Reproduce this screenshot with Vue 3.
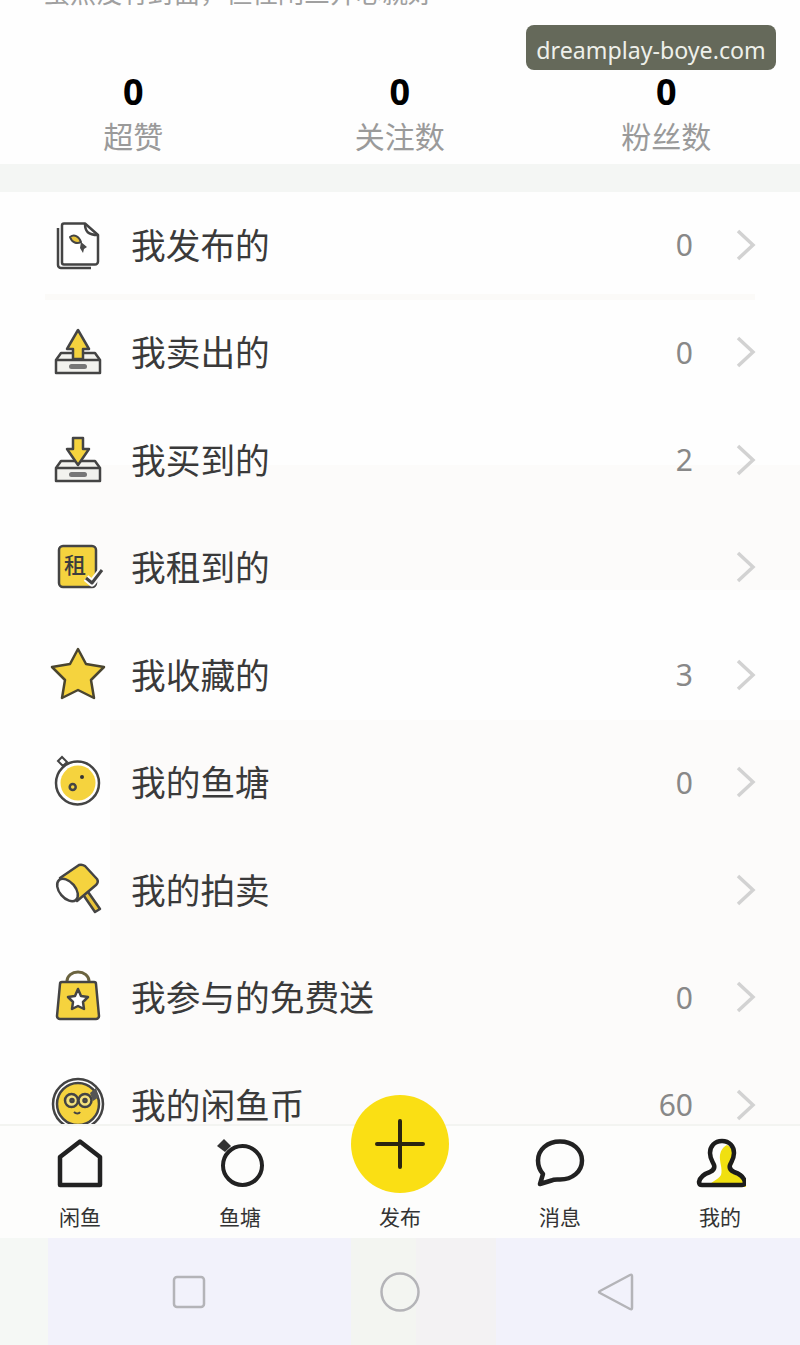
<script setup>
const stats = [
  { value: 0, label: "超赞" },
  { value: 0, label: "关注数" },
  { value: 0, label: "粉丝数" },
];

const rows = [
  { icon: "post", label: "我发布的", count: "0" },
  { icon: "sold", label: "我卖出的", count: "0" },
  { icon: "bought", label: "我买到的", count: "2" },
  { icon: "rent", label: "我租到的", count: "" },
  { icon: "star", label: "我收藏的", count: "3" },
  { icon: "pond", label: "我的鱼塘", count: "0" },
  { icon: "auction", label: "我的拍卖", count: "" },
  { icon: "free", label: "我参与的免费送", count: "0" },
  { icon: "coin", label: "我的闲鱼币", count: "60" },
];

const tabs = [
  { icon: "home", label: "闲鱼" },
  { icon: "ring", label: "鱼塘" },
  { icon: "plus", label: "发布" },
  { icon: "chat", label: "消息" },
  { icon: "me", label: "我的" },
];
</script>

<template>
  <div class="page">
    <div class="intro">虽然没有封面，但性闲三开心就好</div>
    <div class="watermark">dreamplay-boye.com</div>

    <div class="stats">
      <div v-for="s in stats" :key="s.label" class="stat">
        <div class="stat-value">{{ s.value }}</div>
        <div class="stat-label">{{ s.label }}</div>
      </div>
    </div>

    <div class="band"></div>

    <div class="list">
      <div v-for="row in rows" :key="row.label" class="row">
        <div class="row-icon">
          <svg v-if="row.icon === 'post'" width="60" height="60" viewBox="0 0 60 60" fill="none" stroke="#444" stroke-width="2.500" stroke-linejoin="round">
            <path d="M10 12v37a3 3 0 0 0 3 3h30" />
            <path d="M16 7.500a2 2 0 0 0-2 2v37a2 2 0 0 0 2 2h31a3 3 0 0 0 3-3V19L37 7.500z" fill="#fff" />
            <path d="M37 7.500c0 8 3 11.500 13 11.500" />
            <path d="M22 21c4-3 9-1 11 5-4 2-9 1-11-5z" fill="#e9c43a" stroke-width="2" />
            <path d="M33 26l6 5-3 2-1 4-3-5z" fill="#4a4a4a" stroke="none" />
          </svg>

          <svg v-else-if="row.icon === 'sold'" width="60" height="60" viewBox="0 0 60 60" fill="none" stroke="#444" stroke-width="2.500" stroke-linejoin="round">
            <path d="M8 37l5-7h34l5 7v13H8z" fill="#f2f2ee" />
            <path d="M8 37h44" />
            <path d="M30 7L19 26h6v10h10V26h6z" fill="#f5d33e" />
            <rect x="21" y="41" width="18" height="5" rx="2.500" fill="#777" stroke="none" />
          </svg>

          <svg v-else-if="row.icon === 'bought'" width="60" height="60" viewBox="0 0 60 60" fill="none" stroke="#444" stroke-width="2.500" stroke-linejoin="round">
            <path d="M8 37l5-7h34l5 7v13H8z" fill="#f2f2ee" />
            <path d="M8 37h44" />
            <path d="M25 7h10v11h6L30 34 19 18h6z" fill="#f5d33e" />
            <rect x="21" y="41" width="18" height="5" rx="2.500" fill="#777" stroke="none" />
          </svg>

          <svg v-else-if="row.icon === 'rent'" width="60" height="60" viewBox="0 0 60 60" fill="none" stroke="#444" stroke-width="2.500" stroke-linejoin="round">
            <rect x="11" y="8" width="37" height="41" rx="4" fill="#f5d33e" />
            <text x="27" y="35" text-anchor="middle" class="rent-text">租</text>
            <path d="M38 40l6 5 10-13" stroke="#fdfcfb" stroke-width="7" />
            <path d="M38 40l6 5 10-13" fill="none" stroke-width="3" />
          </svg>

          <svg v-else-if="row.icon === 'star'" width="60" height="60" viewBox="0 0 60 60" stroke="#4a4530" stroke-width="2.500" stroke-linejoin="round">
            <path d="M30 3l8 15 18 3-13 13 3 18-16-8-16 8 3-18L4 21l18-3z" fill="#f5d33e" />
          </svg>

          <svg v-else-if="row.icon === 'pond'" width="60" height="60" viewBox="0 0 60 60" fill="none" stroke="#444" stroke-width="2.500">
            <circle cx="29.500" cy="30" r="21.500" fill="#fff" />
            <circle cx="30" cy="30" r="17.500" fill="#f5d33e" stroke="none" />
            <path d="M10 8l4-4 5 5-4 4z" fill="#fff" stroke-width="2" />
            <circle cx="24.700" cy="34" r="3" />
            <circle cx="34" cy="24" r="2" fill="#333" stroke="none" />
          </svg>

          <svg v-else-if="row.icon === 'auction'" width="60" height="60" viewBox="0 0 60 60" fill="none" stroke="#444" stroke-width="2.500" stroke-linejoin="round">
            <path d="M34 32l13 19 5-3-14-20z" fill="#e9c43a" />
            <path d="M12 17L31 4q3-1 6 1l12 13q2 3-1 6L29 40z" fill="#f5d33e" />
            <ellipse cx="19.500" cy="29" rx="8" ry="13" transform="rotate(-40 19.500 29)" fill="#fff" />
          </svg>

          <svg v-else-if="row.icon === 'free'" width="60" height="60" viewBox="0 0 60 60" fill="none" stroke="#444" stroke-width="2.500" stroke-linejoin="round">
            <path d="M19 16v-3a11 9 0 0 1 22 0v3" stroke="#6b6440" stroke-width="3" />
            <path d="M14 14h32a2 2 0 0 1 2 2l3 32a3 3 0 0 1-3 3H12a3 3 0 0 1-3-3l3-32a2 2 0 0 1 2-2z" fill="#f5d33e" />
            <path d="M30 21l3 7 7 1-5 5 1 7-6-3-6 3 1-7-5-5 7-1z" fill="#fff" />
          </svg>

          <svg v-else-if="row.icon === 'coin'" width="60" height="60" viewBox="0 0 60 60" fill="none" stroke="#444" stroke-width="2.500">
            <circle cx="30" cy="28" r="25" fill="#fff" />
            <circle cx="30" cy="28" r="21" fill="#f5d33e" />
            <circle cx="23.500" cy="24.500" r="6.500" fill="#f5e27c" />
            <circle cx="37" cy="24.500" r="6.500" fill="#f5e27c" />
            <circle cx="24" cy="24.500" r="1.500" />
            <circle cx="37" cy="24.500" r="1.500" />
            <path d="M26 36c2 2 5 2 6 0" stroke-width="2" />
            <path d="M42 17l6-5 3 9-6 4z" fill="#555" stroke="none" />
          </svg>
        </div>
        <div class="row-label">{{ row.label }}</div>
        <div class="row-count">{{ row.count }}</div>
        <svg class="row-arrow" width="20" height="32" viewBox="0 0 20 32" fill="none" stroke="#d2d2d2" stroke-width="3.500">
          <path d="M2 2l15 14L2 30" />
        </svg>
      </div>
    </div>

    <div class="tabbar">
      <div v-for="t in tabs" :key="t.label" class="tab">
        <div class="tab-icon">
          <svg v-if="t.icon === 'home'" width="52" height="52" viewBox="0 0 52 52" fill="none" stroke="#222" stroke-width="4.500" stroke-linejoin="round">
            <path d="M26 3.500L6 19v28h40V19z" />
          </svg>
          <svg v-else-if="t.icon === 'ring'" width="52" height="52" viewBox="0 0 52 52" fill="none" stroke="#222" stroke-width="4">
            <circle cx="28.500" cy="27.500" r="19.500" />
            <path d="M3 8l7-7 7 7-6 6z" fill="#333" stroke="none" />
          </svg>
          <div v-else-if="t.icon === 'plus'" class="plus">
            <svg width="50" height="50" viewBox="0 0 50 50" fill="none" stroke="#2a2410" stroke-width="4" stroke-linecap="round">
              <path d="M25 2v46M2 25h46" />
            </svg>
          </div>
          <svg v-else-if="t.icon === 'chat'" width="52" height="52" viewBox="0 0 52 52" fill="none" stroke="#222" stroke-width="4.500" stroke-linejoin="round">
            <path d="M26 3.500c12.500 0 22 8 22 19s-9.500 19-22 19c-3 0-6-.500-8.500 1L6 46l3-10C5.500 32 4 27 4 22.500c0-11 9.500-19 22-19z" />
          </svg>
          <svg v-else-if="t.icon === 'me'" width="52" height="52" viewBox="0 0 52 52" fill="none">
            <path d="M33 7c6 3 9 9 7 16-2 5-5 9-2 12 5 3 12 4 14 14H14c3-6 10-7 13-12 2-6-2-14-1-20 1-5 3-8 7-10z" fill="#f0e010" />
            <path d="M28 3c7.500 0 12 5.500 12 12 0 6-3 9-4 12-1 3 0 5 4 7 6 2 10 5 11 10 0 2-1 3-3 3H8c-2 0-3-1-3-3 1-5 5-8 11-10 4-2 5-4 4-7-1-3-4-6-4-12 0-6.500 4.500-12 12-12z" stroke="#1c1c1c" stroke-width="4.500" />
          </svg>
        </div>
        <div class="tab-label">{{ t.label }}</div>
      </div>
    </div>

    <div class="navbar">
      <svg width="34" height="34" viewBox="0 0 34 34" fill="none" stroke="#b4b4b8" stroke-width="2.500">
        <rect x="2" y="2" width="30" height="30" rx="3" />
      </svg>
      <svg width="40" height="40" viewBox="0 0 40 40" fill="none" stroke="#b4b4b8" stroke-width="2.500">
        <circle cx="20" cy="20" r="18.500" />
      </svg>
      <svg width="40" height="40" viewBox="0 0 40 40" fill="none" stroke="#b4b4b8" stroke-width="2.500" stroke-linejoin="round">
        <path d="M36 3q2-1 2 1v32q0 2-2 1L6 21q-2-1 0-2z" />
      </svg>
    </div>
  </div>
</template>

<style>
body {
  background: #fff;
}
</style>

<style scoped>
.page {
  position: relative;
  width: 800px;
  height: 1345px;
  overflow: hidden;
  background: #fefefe;
  display: flex;
  flex-direction: column;
  font-family: "Liberation Sans", "Noto Sans CJK SC", sans-serif;
}

.intro {
  height: 98px;
  margin-top: -24px;
  padding-left: 44px;
  font-size: 26px;
  line-height: 36px;
  color: #a0a0a0;
  flex-shrink: 0;
}

.watermark {
  position: absolute;
  top: 25px;
  left: 526px;
  width: 250px;
  height: 45px;
  border-radius: 8px;
  background: #65695a;
  color: #eef0ea;
  font-family: "Noto Sans", sans-serif;
  font-size: 23.200px;
  line-height: 50px;
  text-align: center;
}

.stats {
  display: grid;
  grid-template-columns: repeat(3, 266.500px);
  height: 90px;
  flex-shrink: 0;
}

.stat {
  text-align: center;
}

.stat-value {
  font-family: "Noto Sans", sans-serif;
  font-size: 36px;
  font-weight: 700;
  line-height: 36px;
  color: #000;
}

.stat-label {
  font-size: 30px;
  line-height: 54px;
  padding-top: 1px;
  color: #9a9a9a;
}

.band {
  height: 28px;
  background: #f4f6f4;
  flex-shrink: 0;
}

.list {
  flex: 1;
  min-height: 0;
  background:
    linear-gradient(#fcfbfa, #fcfbfa) 80px 273px / 720px 125px no-repeat,
    linear-gradient(#fcfbfa, #fcfbfa) 110px 528px / 690px 420px no-repeat,
    #fefefe;
}

.row {
  display: flex;
  align-items: center;
  height: 107.500px;
  padding: 0 44px 0 48px;
  position: relative;
}

.row:first-child::after {
  content: "";
  position: absolute;
  left: 45px;
  right: 45px;
  bottom: 0;
  height: 6px;
  background: #fbfaf8;
}

.row-icon {
  width: 60px;
  height: 60px;
  margin-right: 23px;
  flex-shrink: 0;
}

.row-label {
  flex: 1;
  font-size: 34.700px;
  margin-top: -4px;
  color: #3a3a3a;
}

.row-count {
  margin-right: 43px;
  margin-bottom: 2px;
  font-family: "Noto Sans", sans-serif;
  font-size: 30px;
  color: #888;
}

.row-arrow {
  margin-bottom: 2px;
  flex-shrink: 0;
}

.tabbar {
  display: grid;
  grid-template-columns: repeat(5, 160px);
  height: 112px;
  background: #fdfdfc;
  border-top: 2px solid #f3f4f1;
  flex-shrink: 0;
  position: relative;
}

.tab {
  display: flex;
  flex-direction: column;
  align-items: center;
}

.tab-icon {
  height: 64px;
  margin-top: 12px;
}

.tab-label {
  margin-top: 1px;
  font-size: 21px;
  line-height: 30px;
  color: #333;
}

.plus {
  position: absolute;
  left: 351px;
  top: -31px;
  width: 98px;
  height: 98px;
  border-radius: 50%;
  background: #fadf14;
  display: flex;
  align-items: center;
  justify-content: center;
}

.navbar {
  height: 107px;
  background: linear-gradient(90deg, #f5f8f5 48px, #f2f2fb 48px, #f2f2fb 351px, #f3f5f1 351px, #f3f5f1 416px, #f3f2f3 416px, #f3f2f3 496px, #f2f2fb 496px);
  display: flex;
  gap: 174px;
  padding-left: 172px;
  align-items: center;
  flex-shrink: 0;
}

.rent-text {
  font-family: "Noto Sans CJK SC", sans-serif;
  font-size: 22px;
  font-weight: 500;
  fill: #3d3d3d;
  stroke: none;
}
</style>
